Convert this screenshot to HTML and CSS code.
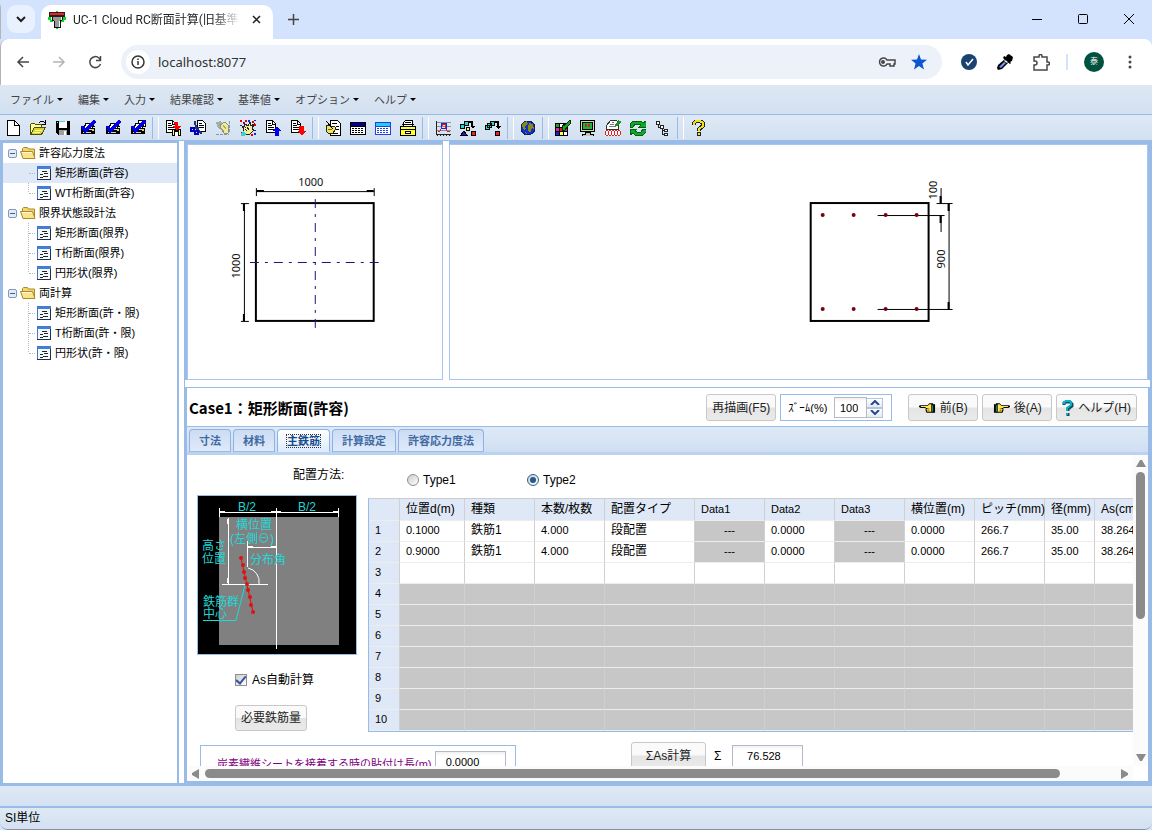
FILE: index.html
```
<!DOCTYPE html>
<html lang="ja">
<head>
    <meta charset="utf-8">
    <title>UC-1 Cloud RC断面計算(旧基準)</title>
    <link rel="stylesheet" href="styles.css">
</head>
<body>

<!-- shared icons -->
<svg class="defs" aria-hidden="true">
    <symbol id="i-printer" viewBox="0 0 16 16">
        <path d="M5 6h10v1H5zM1 8h14v6H1z" fill="#000"/>
        <path d="M6 3h8l-2 5H4z" fill="#fff" stroke="#000"/>
        <path d="M2 9h10v1H2zM3 12h8v1H3z" fill="#d0d0d0"/>
        <path d="M12 9h2v2h-2z" fill="#e0d840"/>
        <path d="M2 6l3 5L15 1" fill="none" stroke="#0000e8" stroke-width="3"/>
    </symbol>
    <symbol id="i-doc" viewBox="0 0 16 16">
        <path d="M1.500 .5h6l3 3v9h-9z" fill="#fff" stroke="#000"/>
        <path d="M7.500 1v3h3M3 3.500h3M3 5.500h4M3 7.500h6M3 9.500h6" fill="none" stroke="#000"/>
    </symbol>
    <symbol id="i-folder" viewBox="0 0 16 16">
        <path d="M2.500 12V3.500l1-1h4l1 1.500h6v8z" fill="#f2d668" stroke="#a88a30"/>
        <path d="M3 13.500L.5 6.500h12l2.500 7z" fill="#fbe588" stroke="#a88a30"/>
        <path d="M2 7.500h10" stroke="#fffbe0"/>
    </symbol>
    <symbol id="i-form" viewBox="0 0 14 14">
        <path d="M.5 .5h13v13H.5z" fill="#f4f8ff" stroke="#4a78c0"/>
        <path d="M1 1h12v2H1z" fill="#3f7fe8"/>
        <path d="M0 13.500h14M13.500 3v11" stroke="#203050"/>
        <path d="M5 5.500h5M3 8.500h3M7 7.500h4M3 11.500h3M6 10.500h5" stroke="#222"/>
    </symbol>
    <symbol id="i-hand" viewBox="0 0 18 14">
        <path d="M1 4h8l2-2h4v10H8l-1-2V7H2L0 6V5z" fill="#000"/>
        <path d="M2 5h7l2-2h2v8H9l-1-1 1-1H8V8h1V7H7V6H2z" fill="#ffe94a"/>
        <path d="M14 3h3v9h-3z" fill="#000"/>
        <path d="M14 4h1v7h-1z" fill="#20a0a0"/>
        <path d="M9 8h2M9 10h2" stroke="#806000"/>
    </symbol>
    <symbol id="i-table" viewBox="0 0 16 16">
        <path d="M.5 2.500h15v12H.5z" fill="#fff" stroke="currentColor"/>
        <path d="M1 6.500h14" stroke="currentColor"/>
        <path d="M2 8.500h12M2 10.500h12M2 12.500h12" stroke="currentColor" stroke-dasharray="2 1"/>
    </symbol>
</svg>

<header class="titlebar">
    <button class="tab-search" aria-label="タブを検索">
        <svg width="10" height="8" viewBox="0 0 10 8"><path d="M1 2l4 4 4-4" fill="none" stroke="#1f1f1f" stroke-width="2"/></svg>
    </button>
    <div class="browser-tab">
        <svg width="18" height="18" viewBox="0 0 18 18" shape-rendering="crispEdges">
            <path d="M0 6h3v3H0zM15 6h3v3h-3zM2 9h3v2H2zM13 9h3v2h-3zM8 0h2v2H8zM8 15h2v3H8z" fill="#00e020"/>
            <path d="M1 1h16v5H1z" fill="#222"/>
            <path d="M2 2h14v2H2z" fill="#f02020"/>
            <path d="M5 6h8v3l-2 1v6H7v-6L5 9z" fill="#999"/>
            <path d="M4 6v3l2 1v6h6v-6l2-1V6" fill="none" stroke="#111"/>
        </svg>
        <span class="browser-tab-title">UC-1 Cloud RC断面計算(旧基準</span>
        <button class="icon-btn" aria-label="タブを閉じる">
            <svg width="9" height="9" viewBox="0 0 9 9"><path d="M1 1l7 7M8 1L1 8" stroke="#1f1f1f" stroke-width="1.500"/></svg>
        </button>
    </div>
    <button class="icon-btn new-tab" aria-label="新しいタブ">
        <svg width="11" height="11" viewBox="0 0 11 11"><path d="M5.500 0v11M0 5.500h11" stroke="#444" stroke-width="1.500"/></svg>
    </button>
    <div class="window-controls">
        <button class="icon-btn" aria-label="最小化"><svg width="11" height="11" viewBox="0 0 11 11"><path d="M0 5.500h10" stroke="#000"/></svg></button>
        <button class="icon-btn" aria-label="最大化"><svg width="11" height="11" viewBox="0 0 11 11"><rect x=".5" y=".5" width="9" height="9" rx="1" fill="none" stroke="#000"/></svg></button>
        <button class="icon-btn" aria-label="閉じる"><svg width="11" height="11" viewBox="0 0 11 11"><path d="M0 0l10 10M10 0L0 10" stroke="#000"/></svg></button>
    </div>
</header>

<div class="navbar">
    <div class="nav-buttons">
        <button class="icon-btn" aria-label="戻る"><svg width="14" height="14" viewBox="0 0 14 14"><path d="M13 7H2M7 2L2 7l5 5" fill="none" stroke="#474747" stroke-width="1.500"/></svg></button>
        <button class="icon-btn" aria-label="進む"><svg width="14" height="14" viewBox="0 0 14 14"><path d="M1 7h11M7 2l5 5-5 5" fill="none" stroke="#b4b4b4" stroke-width="1.500"/></svg></button>
        <button class="icon-btn" aria-label="再読み込み"><svg width="14" height="14" viewBox="0 0 14 14"><path d="M12.500 9A5.500 5.500 0 1 1 11 3l1.500 2" fill="none" stroke="#474747" stroke-width="1.500"/><path d="M12.500 1v4.500H8" fill="none" stroke="#474747" stroke-width="1.500"/></svg></button>
    </div>
    <div class="address">
        <button class="site-info" aria-label="サイト情報">
            <svg width="14" height="14" viewBox="0 0 14 14"><circle cx="7" cy="7" r="6" fill="none" stroke="#333" stroke-width="1.500"/><path d="M7 6v4M7 3.500V5" stroke="#333" stroke-width="1.500"/></svg>
        </button>
        <input type="text" class="url" value="localhost:8077" aria-label="アドレス">
        <svg width="18" height="12" viewBox="0 0 18 12"><path d="M9 4a4 4 0 1 0 0 4h3v2h4V8h1V4z" fill="none" stroke="#474747" stroke-width="1.500"/><circle cx="5" cy="6" r="2" fill="#474747"/></svg>
        <svg width="16" height="16" viewBox="0 0 16 16"><path d="M8 0l2 5.500 6 .3-4.600 3.700L13 15.500 8 12l-5 3.500 1.600-6L0 5.800l6-.3z" fill="#0b57d0"/></svg>
    </div>
    <div class="extensions">
        <svg width="16" height="16" viewBox="0 0 16 16"><circle cx="8" cy="8" r="8" fill="#1b426f"/><path d="M5 8l2 3 5-6" fill="none" stroke="#fff" stroke-width="1.500"/></svg>
        <svg width="16" height="16" viewBox="0 0 16 16"><path d="M10 1l2-1 4 3-1 4-2 1 1 1-1 1-7-6 1-2 2 1z" fill="#000"/><path d="M8 5l4 3-7 7-4 1-1-2 1-3z" fill="#000"/><path d="M7 8l2 1-5 5-2-1z" fill="#6f93ff"/><path d="M7 7l1-1 3 2-1 1z" fill="#fff"/></svg>
        <svg width="17" height="17" viewBox="0 0 17 17"><path d="M1 3h5V2a1.500 1.500 0 0 1 3 0v1h5v5h1a1.500 1.500 0 0 1 0 3h-1v5H1v-5h1a2 2 0 0 0 0-4H1z" fill="none" stroke="#474747" stroke-width="1.500"/></svg>
        <span class="ext-divider"></span>
        <span class="avatar">泰</span>
        <button class="icon-btn more" aria-label="メニュー"><svg width="4" height="14" viewBox="0 0 4 14" fill="#474747"><circle cx="2" cy="2" r="1.500"/><circle cx="2" cy="7" r="1.500"/><circle cx="2" cy="12" r="1.500"/></svg></button>
    </div>
</div>

<nav class="menubar">
    <button>ファイル</button>
    <button>編集</button>
    <button>入力</button>
    <button>結果確認</button>
    <button>基準値</button>
    <button>オプション</button>
    <button>ヘルプ</button>
</nav>

<div class="toolbar">
    <button aria-label="新規作成"><svg viewBox="0 0 16 16"><path d="M2.500 .5h7l5 5v10h-12z" fill="#fff" stroke="#000"/><path d="M9.500 .5v5h5" fill="none" stroke="#000"/></svg></button>
    <button aria-label="開く"><svg viewBox="0 0 16 16"><path d="M.5 14.500v-10l1-1h3l1 1h6v3" fill="#ffff9c" stroke="#505000"/><path d="M.5 14.500l4-7h11l-4 7z" fill="#d8d040" stroke="#505000"/><path d="M3 12h7M5 10h7" stroke="#ffff80"/><path d="M9 3l2-2h2l2 2M15 0v4h-3" fill="none" stroke="#000"/></svg></button>
    <button aria-label="保存"><svg viewBox="0 0 16 16"><path d="M1 1h14v14H3l-2-2z" fill="#000"/><path d="M4 1h8v7H4z" fill="#fff"/><path d="M4 1h6v1H4zM2 2h1v1H2z" fill="#40e0e0"/><path d="M4 10h8v5H4z" fill="#a0a0a0"/><path d="M9 11h2v4H9z" fill="#fff"/></svg></button>
    <button aria-label="印刷"><svg viewBox="0 0 16 16"><use href="#i-printer"/></svg></button>
    <button aria-label="印刷プレビュー"><svg viewBox="0 0 16 16"><use href="#i-printer"/></svg></button>
    <button aria-label="一括印刷"><svg viewBox="0 0 16 16"><path d="M8.500 .5h7v6h-7z" fill="#fff" stroke="#000"/><use href="#i-printer"/></svg></button>
    <span class="sep"></span>
    <button aria-label="コピー"><svg viewBox="0 0 16 16"><use href="#i-doc"/><path d="M7 9h9v7H7z" fill="#000"/><path d="M8 10h1v5H8zM14 10h1v5h-1z" fill="#ffff60"/><path d="M10 12h3v4h-3z" fill="#fff"/><path d="M9 2h4v4h3l-4 5-4-5h2V4H9z" fill="#f00"/></svg></button>
    <button aria-label="切り取り"><svg viewBox="0 0 16 16"><path d="M7.500 .5h5l3 3v8h-8z" fill="#fff" stroke="#000"/><path d="M9 3.500h3M9 5.500h5M9 7.500h5" stroke="#000"/><path d="M5 1l1 7 6 6M1 8h8" fill="none" stroke="#203080" stroke-width="2"/><path d="M1 8h3v3H1zM5 11h3v3H5z" fill="none" stroke="#0000c0" stroke-width="2"/></svg></button>
    <button aria-label="貼り付け"><svg viewBox="0 0 16 16"><path d="M1 2l5-1 4 5-3 4-4-2z" fill="#9ab0a8"/><path d="M5 5l5-3 3 3v8l-3 1-4-5z" fill="#eeea9c" stroke="#909080"/><path d="M8 5l3 4M6 8l3 3" stroke="#b0a860"/><path d="M14 1v12M1 14h13" stroke="#8898a8" stroke-dasharray="3 1"/></svg></button>
    <button aria-label="クリア"><svg viewBox="0 0 16 16"><path d="M0 0h2v2H0zM3 2h2v2H3zM5 0h2v2H5zM12 1h2v2h-2zM14 4h2v2h-2zM1 12h1v2H1zM11 14h2v2h-2z" fill="#e00000"/><path d="M8 0h2v2H8zM14 0h2v1h-2zM0 5h2v1H0zM13 10h3v1h-3zM14 13h2v2h-2z" fill="#2020e0"/><path d="M3 13l1-4-2-3 3 1-1-4 4 3 2-4 1 4 3-2-2 5 2 1-4 4-4 1z" fill="#f3ee9c" stroke="#222"/><path d="M7 7l2 3M5 9l2 2" stroke="#222"/><path d="M1 13l3-2 2 3-2 2H1z" fill="#40d0d0"/></svg></button>
    <button aria-label="上へ"><svg viewBox="0 0 16 16"><use href="#i-doc"/><path d="M12 6l4 5h-2v5h-4v-5H7z" fill="#0000f0"/></svg></button>
    <button aria-label="下へ"><svg viewBox="0 0 16 16"><use href="#i-doc"/><path d="M9 6h5v5h2l-4 5-5-5h2z" fill="#f00"/></svg></button>
    <span class="sep"></span>
    <button aria-label="入力"><svg viewBox="0 0 16 16"><path d="M5.500 .5h7l3 3v12h-10z" fill="#fff" stroke="#000"/><path d="M7 3.500h5M11 6.500h3M11 9.500h3M8 13.500h5" stroke="#000"/><path d="M1 5l4 1 5 1v3l-2 3H3l-2-2z" fill="#f0e458" stroke="#222"/><path d="M1 1l7 8" stroke="#000"/><path d="M3 9.500h4" stroke="#806000"/></svg></button>
    <button aria-label="表1"><svg viewBox="0 0 16 16" color="#000"><use href="#i-table"/><path d="M1 3h14v3H1z" fill="#000090"/></svg></button>
    <button aria-label="表2"><svg viewBox="0 0 16 16" color="#2040e0"><use href="#i-table"/><path d="M1 3h14v3H1z" fill="#20d0f0"/></svg></button>
    <button aria-label="保管"><svg viewBox="0 0 16 16"><path d="M3.500 6.500v-4l2-2h7v6" fill="#fff" stroke="#000"/><path d="M2 4.500h12M5 2.500h6" stroke="#000"/><path d="M.5 6.500h15v9H.5z" fill="#ffff30" stroke="#000"/><path d="M1 9.500h14" stroke="#000"/><path d="M5.500 11.500h5v2h-5z" fill="#fff" stroke="#000"/></svg></button>
    <span class="sep"></span>
    <button aria-label="グラフ"><svg viewBox="0 0 16 16"><path d="M1 2.500h15M1 6.500h15M1 10.500h15" stroke="#909090"/><path d="M1.500 1v13H16" fill="none" stroke="#222"/><path d="M2 15h14" stroke="#222" stroke-dasharray="1 2"/><path d="M3 12l2-1 3-7h2l2 7 3 1" fill="none" stroke="#e02020"/><circle cx="9" cy="6" r="3" fill="none" stroke="#2020e0"/></svg></button>
    <button aria-label="計算"><svg viewBox="0 0 16 16"><path d="M.5 4.500h4v4h-4zM4.500 1.500h4v4h-4z" fill="#20d8d8" stroke="#000"/><path d="M9 1h4v5h2l-2 3-3-3h1V3H9z" fill="#000"/><circle cx="8" cy="9" r="2" fill="#ffff40" stroke="#000"/><path d="M1 15l3-4 3 4z" fill="#2020e0" stroke="#000"/><path d="M11.500 11.500h4v4h-4z" fill="#f02020" stroke="#000"/></svg></button>
    <button aria-label="一括計算"><svg viewBox="0 0 16 16"><path d="M.5 5.500h4v4h-4zM2.500 3.500h4v4h-4zM5.500 1.500h4v4h-4z" fill="#20d8d8" stroke="#000"/><path d="M10 1h4v5h2l-3 3-3-3h2V3h-2z" fill="#000"/><path d="M10.500 11.500h4v4h-4z" fill="#f02020" stroke="#000"/></svg></button>
    <span class="sep"></span>
    <button aria-label="Web"><svg viewBox="0 0 16 16"><circle cx="8" cy="8" r="7" fill="#1030d0" stroke="#102060"/><path d="M3 3l4-2 1 3-3 2 1 3-2 1-2-4zM9 3l4 1 1 5-2-1-2 5-2-3V7zM4 12l3 1v1z" fill="#8a8a10"/></svg></button>
    <span class="sep"></span>
    <button aria-label="配色"><svg viewBox="0 0 16 16"><path d="M0 3h13v13H0z" fill="#000"/><path d="M1 4h3v3H1z" fill="#20a020"/><path d="M5 4h3v3H5z" fill="#fff"/><path d="M1 8h3v3H1zM9 8h3v3H9z" fill="#e020a0"/><path d="M5 8h3v3H5z" fill="#d02020"/><path d="M1 12h3v3H1z" fill="#2020e0"/><path d="M5 12h3v3H5z" fill="#ffff40"/><path d="M9 12h3v3H9z" fill="#fff"/><path d="M15 0l-5 5-3 1v4h3l2-3 4-4z" fill="#20a020" stroke="#043004"/></svg></button>
    <button aria-label="画面"><svg viewBox="0 0 16 16"><path d="M.5 .5h14v11H.5z" fill="#d8d4b8" stroke="#000"/><path d="M2.500 2.500h10v7h-10z" fill="#10c020" stroke="#000"/><path d="M5 4h2v3H5zM8 4h2v3H8z" fill="#c02060"/><path d="M5 12h5v2h3v2H2v-2h3z" fill="#c8c8b0" stroke="#000"/></svg></button>
    <button aria-label="書式"><svg viewBox="0 0 16 16"><path d="M1.500 9V5.500l4-5h6l2 2V9z" fill="#fff" stroke="#333"/><path d="M4 6.500h7M5 4.500h4M7 2.500h2" stroke="#777"/><path d="M15 1l-4 5" stroke="#209020" stroke-width="3"/><path d="M0 10h16v6H0z" fill="#fff"/><path d="M.5 11v4M3.500 11v4M6.500 11v4M9.500 11v4M12.500 11v4M15.500 11v4" stroke="#e02020"/><path d="M1 10.500h15M1 15.500h15" stroke="#e02020" stroke-dasharray="2 1"/></svg></button>
    <button aria-label="更新"><svg viewBox="0 0 16 16"><path d="M0 7V4l3-3h8l2 2 3-2v6H9l2-2-2-1H5L3 7z" fill="#10a828" stroke="#046014"/><path d="M16 9v3l-3 3H5l-2-2-3 2V9h7l-2 2 2 1h4l2-3z" fill="#10a828" stroke="#046014"/></svg></button>
    <button aria-label="ツリー"><svg viewBox="0 0 16 16"><path d="M1.500 1.500h3v3h-3zM5.500 5.500h3v3h-3zM9.500 9.500h3v2h-3zM9.500 13.500h3v2h-3z" fill="#fff" stroke="#222"/><path d="M3.500 5v2h2M7.500 9v5.500h2M7.500 10.500h2" fill="none" stroke="#222"/></svg></button>
    <span class="sep"></span>
    <button aria-label="ヘルプ"><svg viewBox="0 0 16 16"><path d="M4 5V3l2-2h4l3 2v3l-4 3v2" fill="none" stroke="#222" stroke-width="4"/><path d="M4 5V3l2-2h4l3 2v3l-4 3v2" fill="none" stroke="#f0e020" stroke-width="2"/><path d="M7.500 12.500h3v3h-3z" fill="#f0e020" stroke="#222"/></svg></button>
</div>

<main class="workspace">
    <aside class="sidebar">
        <ul class="tree">
            <li>
                <div class="branch"><button class="toggle" aria-label="折りたたむ"></button><svg><use href="#i-folder"/></svg>許容応力度法</div>
                <ul>
                    <li><a href="#rect1" class="selected"><svg><use href="#i-form"/></svg>矩形断面(許容)</a></li>
                    <li><a href="#wt"><svg><use href="#i-form"/></svg>WT桁断面(許容)</a></li>
                </ul>
            </li>
            <li>
                <div class="branch"><button class="toggle" aria-label="折りたたむ"></button><svg><use href="#i-folder"/></svg>限界状態設計法</div>
                <ul>
                    <li><a href="#rect2"><svg><use href="#i-form"/></svg>矩形断面(限界)</a></li>
                    <li><a href="#t2"><svg><use href="#i-form"/></svg>T桁断面(限界)</a></li>
                    <li><a href="#circle2"><svg><use href="#i-form"/></svg>円形状(限界)</a></li>
                </ul>
            </li>
            <li>
                <div class="branch"><button class="toggle" aria-label="折りたたむ"></button><svg><use href="#i-folder"/></svg>両計算</div>
                <ul>
                    <li><a href="#rect3"><svg><use href="#i-form"/></svg>矩形断面(許・限)</a></li>
                    <li><a href="#t3"><svg><use href="#i-form"/></svg>T桁断面(許・限)</a></li>
                    <li><a href="#circle3"><svg><use href="#i-form"/></svg>円形状(許・限)</a></li>
                </ul>
            </li>
        </ul>
    </aside>
    <div class="splitter-v"></div>

    <div class="center">
        <div class="drawings">
            <div class="drawing drawing-section">
                <svg viewBox="0 0 254 234" fill="none" stroke="#000">
                    <rect x="68" y="58" width="118" height="118" stroke-width="2"/>
                    <path d="M68.500 46.500h118M68.500 43v8M186.500 43v8M56.500 58.500v118M53 58.500h8M53 176.500h8"/>
                    <path d="M69 46h7M179 46h7M56 59v7M56 169v7" stroke-width="2"/>
                    <path d="M127.500 54v130M62 117.500h129" stroke="#1c1280" stroke-dasharray="9 6 3 6"/>
                    <text x="123" y="41">1000</text>
                    <text transform="translate(52 121) rotate(-90)">1000</text>
                </svg>
            </div>
            <div class="splitter-v"></div>
            <div class="drawing drawing-rebar">
                <svg viewBox="0 0 698 234" fill="none" stroke="#000">
                    <rect x="361" y="58" width="118" height="118" stroke-width="2"/>
                    <path d="M428 70.500h67M428 164.500h75M487 58.500h16M499.500 58.500v106M491.500 43v15M491.500 71v16"/>
                    <path d="M499 59v7M499 157v7M491 51v7M491 71v7" stroke-width="2"/>
                    <g fill="#7a0010" stroke="none">
                        <circle cx="373" cy="70" r="2"/><circle cx="404" cy="70" r="2"/><circle cx="436" cy="70" r="2"/><circle cx="467" cy="70" r="2"/>
                        <circle cx="373" cy="164" r="2"/><circle cx="404" cy="164" r="2"/><circle cx="436" cy="164" r="2"/><circle cx="467" cy="164" r="2"/>
                    </g>
                    <text transform="translate(487 45) rotate(-90)">100</text>
                    <text transform="translate(495 114) rotate(-90)">900</text>
                </svg>
            </div>
        </div>
        <div class="splitter-h"></div>

        <section class="editor">
            <div class="editor-head">
                <h1>Case1：矩形断面(許容)</h1>
                <button class="btn">再描画(F5)</button>
                <div class="zoom-box">
                    <label for="zoom">ｽﾞｰﾑ(%)</label>
                    <input type="text" id="zoom" value="100">
                    <div class="spinner">
                        <button aria-label="拡大"><svg width="10" height="5" viewBox="0 0 10 5"><path d="M1 5l4-4 4 4" fill="none" stroke="#24478f" stroke-width="2"/></svg></button>
                        <button aria-label="縮小"><svg width="10" height="5" viewBox="0 0 10 5"><path d="M1 0l4 4 4-4" fill="none" stroke="#24478f" stroke-width="2"/></svg></button>
                    </div>
                </div>
                <div class="head-nav">
                    <button class="btn"><svg width="17" height="14"><use href="#i-hand"/></svg>前(B)</button>
                    <button class="btn"><svg width="17" height="14" class="flip"><use href="#i-hand"/></svg>後(A)</button>
                    <button class="btn"><svg width="12" height="16" viewBox="0 0 12 16"><path d="M2 5V3l2-1h4l2 2v2L6 9v2M6 13v3" fill="none" stroke="#0c5060" stroke-width="3"/><path d="M2 4V2l2-1h4l1 2v2L5 8v3M5 13v2" fill="none" stroke="#10b0c8" stroke-width="2"/></svg>ヘルプ(H)</button>
                </div>
            </div>

            <div class="tabs" role="tablist">
                <button role="tab">寸法</button>
                <button role="tab">材料</button>
                <button role="tab" class="active"><span>主鉄筋</span></button>
                <button role="tab">計算設定</button>
                <button role="tab">許容応力度法</button>
            </div>

            <div class="scroller">
                <div class="sheet">
                    <div class="placement">
                        <span class="placement-label">配置方法:</span>
                        <label><input type="radio" name="placement">Type1</label>
                        <label><input type="radio" name="placement" checked>Type2</label>
                    </div>

                    <div class="rebar">
                        <div class="guide">
                            <svg class="guide-figure" viewBox="1 1 158 158" fill="none" stroke="#fff">
                                <rect x="22" y="22" width="120" height="128" fill="#808080" stroke="none"/>
                                <path d="M22 17.500h120M22.500 13v9M141.500 13v9M79.500 13v141M31.500 23v66M50.500 46v26M50 52.500h29M25 89.500h46M51 73a14 14 0 0 1 11 16"/>
                                <path d="M23 17h5M74 17h10M136 17h5M31 24v5M31 83v5M51 52h5M74 52h5" stroke-width="2"/>
                                <path d="M6 125.500h33L48 90" stroke="#20d8d8"/>
                                <path d="M44 63L56 117" stroke="#e01010"/>
                                <g fill="#e01010" stroke="none">
                                    <circle cx="44" cy="63" r="2"/><circle cx="46" cy="70" r="2"/><circle cx="47" cy="77" r="2"/><circle cx="48" cy="83" r="2"/><circle cx="50" cy="89" r="2"/><circle cx="51" cy="95" r="2"/><circle cx="53" cy="102" r="2"/><circle cx="54" cy="110" r="2"/><circle cx="56" cy="117" r="2"/>
                                </g>
                                <g class="guide-text">
                                    <text x="41" y="16">B/2</text>
                                    <text x="101" y="16">B/2</text>
                                    <text x="39" y="34">横位置</text>
                                    <text x="33" y="48">(左側⊖)</text>
                                    <text x="5" y="55">高さ</text>
                                    <text x="5" y="68">位置</text>
                                    <text x="53" y="69">分布角</text>
                                    <text x="6" y="111">鉄筋群</text>
                                    <text x="6" y="123">中心</text>
                                </g>
                            </svg>
                            <label class="auto"><input type="checkbox" checked>As自動計算</label>
                            <button class="btn">必要鉄筋量</button>
                        </div>

                        <table class="grid">
                            <colgroup>
                                <col class="c-no"><col class="c-pos"><col><col><col class="c-type"><col><col><col><col><col><col class="c-dia"><col>
                            </colgroup>
                            <thead>
                                <tr><th></th><th>位置d(m)</th><th>種類</th><th>本数/枚数</th><th>配置タイプ</th><th class="latin">Data1</th><th class="latin">Data2</th><th class="latin">Data3</th><th>横位置(m)</th><th>ピッチ(mm)</th><th>径(mm)</th><th>As(cm2)</th></tr>
                            </thead>
                            <tbody>
                                <tr><th>1</th><td>0.1000</td><td class="kanji">鉄筋1</td><td>4.000</td><td class="kanji">段配置</td><td class="off">---</td><td>0.0000</td><td class="off">---</td><td>0.0000</td><td>266.7</td><td>35.00</td><td>38.264</td></tr>
                                <tr><th>2</th><td>0.9000</td><td class="kanji">鉄筋1</td><td>4.000</td><td class="kanji">段配置</td><td class="off">---</td><td>0.0000</td><td class="off">---</td><td>0.0000</td><td>266.7</td><td>35.00</td><td>38.264</td></tr>
                                <tr><th>3</th><td></td><td></td><td></td><td></td><td></td><td></td><td></td><td></td><td></td><td></td><td></td></tr>
                                <tr class="empty"><th>4</th><td></td><td></td><td></td><td></td><td></td><td></td><td></td><td></td><td></td><td></td><td></td></tr>
                                <tr class="empty"><th>5</th><td></td><td></td><td></td><td></td><td></td><td></td><td></td><td></td><td></td><td></td><td></td></tr>
                                <tr class="empty"><th>6</th><td></td><td></td><td></td><td></td><td></td><td></td><td></td><td></td><td></td><td></td><td></td></tr>
                                <tr class="empty"><th>7</th><td></td><td></td><td></td><td></td><td></td><td></td><td></td><td></td><td></td><td></td><td></td></tr>
                                <tr class="empty"><th>8</th><td></td><td></td><td></td><td></td><td></td><td></td><td></td><td></td><td></td><td></td><td></td></tr>
                                <tr class="empty"><th>9</th><td></td><td></td><td></td><td></td><td></td><td></td><td></td><td></td><td></td><td></td><td></td></tr>
                                <tr class="empty"><th>10</th><td></td><td></td><td></td><td></td><td></td><td></td><td></td><td></td><td></td><td></td><td></td></tr>
                            </tbody>
                        </table>
                    </div>

                    <div class="totals">
                        <div class="sheet-box">
                            <label for="cfrp">炭素繊維シートを接着する時の貼付け長(m)</label>
                            <input type="text" id="cfrp" class="field" value="0.0000">
                        </div>
                        <div class="sum">
                            <button class="btn">ΣAs計算</button>
                            <label for="sum-as">Σ</label>
                            <input type="text" id="sum-as" class="field" value="76.528">
                        </div>
                    </div>
                </div>
                <div class="vscroll">
                    <svg width="10" height="8" viewBox="0 0 10 8"><path d="M0 8l4-7h2l4 7z" fill="#8b8b8b"/></svg>
                    <div class="track"><div class="thumb"></div></div>
                    <svg width="10" height="8" viewBox="0 0 10 8"><path d="M0 0l4 7h2l4-7z" fill="#8b8b8b"/></svg>
                </div>
                <div class="hscroll">
                    <svg width="8" height="10" viewBox="0 0 8 10"><path d="M8 0L1 4v2l7 4z" fill="#8b8b8b"/></svg>
                    <div class="track"><div class="thumb"></div></div>
                    <svg width="8" height="10" viewBox="0 0 8 10"><path d="M0 0l7 4v2l-7 4z" fill="#8b8b8b"/></svg>
                </div>
            </div>
        </section>
    </div>
</main>

<footer class="status">
    <div></div>
    <div>SI単位</div>
</footer>

</body>
</html>
```
FILE: styles.css
```
* {
    box-sizing: border-box;
    margin: 0;
    padding: 0;
}

body {
    display: flex;
    flex-direction: column;
    min-height: 100vh;
    overflow: hidden;
    border-bottom: 1px solid #8a8f98;
    border-radius: 8px;
    background: #d3e3fd;
    color: #000;
    font-family: "Liberation Sans", "Noto Sans CJK JP", sans-serif;
    font-size: 12px;
    line-height: 20px;
}

button,
input {
    font: inherit;
    color: inherit;
}

button {
    border: 0;
    background: none;
    white-space: nowrap;
}

svg {
    flex: none;
}

ul {
    list-style: none;
}

.defs {
    display: none;
}

.icon-btn {
    display: flex;
    align-items: center;
    justify-content: center;
}

/* browser frame */

.titlebar {
    display: flex;
    height: 39px;
    padding: 5px 0 0 6px;
    border-left: 1px solid #b4b4b4;
}

.tab-search {
    width: 28px;
    height: 28px;
    margin-right: 6px;
    border-radius: 9px;
    background: #e9f0fe;
}

.browser-tab {
    display: flex;
    align-items: center;
    gap: 7px;
    width: 232px;
    padding: 0 12px 5px 7px;
    border-radius: 10px 10px 0 0;
    background: #fff;
}

.browser-tab-title {
    flex: 1;
    overflow: hidden;
    white-space: nowrap;
    font-family: Roboto, "Noto Sans CJK JP", sans-serif;
    color: #1f1f1f;
    mask-image: linear-gradient(to right, #000 84%, transparent);
}

.browser-tab .icon-btn {
    width: 9px;
    margin-left: 5px;
}

.new-tab {
    width: 40px;
    height: 28px;
}

.window-controls {
    display: flex;
    height: 28px;
    margin-left: auto;
}

.window-controls .icon-btn {
    width: 46px;
}

.navbar {
    display: flex;
    align-items: center;
    height: 46px;
    border-left: 1px solid #b4b4b4;
    border-radius: 8px 8px 0 0;
    background: #fff;
}

.nav-buttons {
    display: flex;
    padding: 0 8px 0 4px;
}

.nav-buttons .icon-btn {
    width: 36px;
    height: 34px;
}

.address {
    display: flex;
    flex: 1;
    align-items: center;
    gap: 15px;
    height: 34px;
    padding: 0 15px 0 5px;
    border-radius: 17px;
    background: #edf2fa;
}

.site-info {
    display: flex;
    align-items: center;
    justify-content: center;
    width: 24px;
    height: 24px;
    border-radius: 50%;
    background: #fff;
}

.url {
    flex: 1;
    min-width: 0;
    margin-left: -7px;
    border: 0;
    background: none;
    font-family: "Noto Sans", sans-serif;
    font-size: 13px;
    color: #333;
}

.extensions {
    display: flex;
    align-items: center;
    gap: 20px;
    padding: 0 20px 0 19px;
}

.ext-divider {
    width: 2px;
    height: 16px;
    margin: 0 -4px;
    background: #d3e3fd;
}

.avatar {
    width: 20px;
    height: 20px;
    border-radius: 50%;
    background: #00513f;
    color: #fff;
    font-size: 8px;
    text-align: center;
}

.more {
    margin-left: 4px;
}

/* application menu and toolbar */

.menubar {
    display: flex;
    gap: 15px;
    height: 30px;
    padding: 0 10px;
    border-bottom: 1px solid #99bbe8;
    background: linear-gradient(#dee8f4, #d3e0f0);
    color: #444;
    font-size: 11px;
}

.menubar button {
    display: flex;
    align-items: center;
    gap: 3px;
}

.menubar button::after {
    content: "";
    border: 3px solid transparent;
    border-top-color: #000;
    border-bottom: 0;
}

.toolbar {
    display: flex;
    align-items: center;
    height: 26px;
    border-bottom: 1px solid #99bbe8;
    background: linear-gradient(#dfe9f6, #d2e0f0);
}

.toolbar button {
    display: flex;
    justify-content: center;
    width: 25px;
}

.toolbar svg {
    width: 16px;
    height: 16px;
    shape-rendering: crispEdges;
}

.sep {
    width: 7px;
    height: 22px;
    margin: 0 1px 0 2px;
    border-left: 1px solid #99bbe8;
    border-right: 1px solid #fff;
}

/* workspace */

.workspace {
    display: flex;
    flex: 1;
    background: #99bbe8;
}

.sidebar {
    width: 174px;
    margin: 2px 2px 3px 3px;
    background: #fff;
}

.splitter-v {
    width: 5px;
    margin-bottom: 3px;
    background: #fff;
}

.tree {
    font-size: 11px;
}

.branch,
.tree a {
    display: flex;
    align-items: center;
    gap: 3px;
    height: 20px;
    color: #000;
    text-decoration: none;
    white-space: nowrap;
}

.branch {
    padding-left: 5px;
}

.tree a {
    gap: 4px;
    padding-left: 34px;
}

.tree a.selected {
    background: #dfe8f6;
}

.tree a svg {
    width: 14px;
    height: 14px;
    shape-rendering: crispEdges;
}

.tree ul {
    background: repeating-linear-gradient(#bbb 0 1px, transparent 1px 2px) 25px 0 / 1px calc(100% - 10px) no-repeat;
}

.tree ul a::before {
    content: "";
    width: 6px;
    margin: 0 -2px 0 -8px;
    border-top: 1px dotted #bbb;
}

.toggle {
    width: 9px;
    height: 9px;
    border: 1px solid #7f9db9;
    border-radius: 2px;
    background: linear-gradient(#3a5fa0, #3a5fa0) center / 5px 1px no-repeat, #e4ebf5;
}

.branch svg {
    width: 16px;
    height: 16px;
}

.center {
    display: flex;
    flex: 1;
    flex-direction: column;
    min-width: 0;
    padding-right: 4px;
}

.drawings {
    display: flex;
    height: 239px;
    padding-left: 3px;
}

.drawings .splitter-v {
    width: 6px;
    margin-bottom: 0;
}

.drawing {
    margin-top: 3px;
    border: 1px solid #a9c6ee;
    background: #fff;
}

.drawing-section {
    flex: 4;
}

.drawing-rebar {
    flex: 11;
}

.drawing svg {
    display: block;
    width: 100%;
    height: 234px;
}

.drawing text {
    fill: #111;
    stroke: none;
    font-family: "Noto Sans", sans-serif;
    font-size: 11px;
    text-anchor: middle;
}

.splitter-h {
    height: 7px;
    margin: 0 -2px 0 1px;
    background: #fff;
}

.editor {
    display: flex;
    flex: 1;
    flex-direction: column;
    margin: 1px 0 5px 3px;
    background: #fff;
}

.editor-head {
    display: flex;
    align-items: center;
    gap: 4px;
    height: 38px;
    padding: 1px 11px 0 2px;
}

.editor-head h1 {
    flex: 1;
    font-family: "Noto Sans CJK JP", sans-serif;
    font-size: 15px;
    font-weight: bold;
}

.btn {
    display: flex;
    align-items: center;
    justify-content: center;
    gap: 4px;
    height: 27px;
    padding: 0 5px;
    border: 1px solid #c8c8c8;
    border-radius: 3px;
    background: linear-gradient(#fafafa 48%, #e4e4e4 52%, #eaeaea);
    color: #222;
}

.flip {
    transform: scaleX(-1);
}

.zoom-box {
    display: flex;
    align-items: center;
    height: 27px;
    padding: 0 8px 0 7px;
    border: 1px solid #99bbe8;
}

.zoom-box label {
    width: 46px;
    font-size: 11px;
    white-space: nowrap;
}

.zoom-box input,
.field {
    border: 1px solid #b5b8c8;
    background: linear-gradient(#eef0f2, #fff 4px);
    font-size: 11px;
    text-align: center;
}

.zoom-box input {
    width: 33px;
    height: 21px;
    padding-right: 8px;
    text-align: right;
}

.spinner {
    width: 16px;
}

.spinner button {
    display: flex;
    align-items: center;
    justify-content: center;
    width: 16px;
    height: 10px;
    border: 1px solid #b5c4dc;
    border-left: 0;
    background: linear-gradient(#fff, #e4eaf2);
}

.head-nav {
    display: flex;
    gap: 4px;
    margin-left: 12px;
}

.head-nav .btn {
    min-width: 70px;
}

.tabs {
    display: flex;
    gap: 2px;
    height: 29px;
    padding: 2px 2px 0;
    border-top: 1px solid #99bbe8;
    border-bottom: 3px solid #bcd2f0;
    background: linear-gradient(#dfe9f6, #cfdff2);
}

.tabs button {
    padding: 0 9px;
    border: 1px solid #8db2e3;
    border-bottom-color: #99bbe8;
    border-radius: 4px 4px 0 0;
    background: linear-gradient(#cbdcf3, #dfeafa);
    color: #416aa3;
    font-size: 11px;
    font-weight: bold;
}

.tabs .active {
    border-bottom-color: #deecfd;
    background: linear-gradient(#fff, #deecfd);
    color: #15498b;
}

.tabs .active span {
    outline: 1px dotted #333;
}

/* scrolled form */

.scroller {
    display: grid;
    flex: 1;
    grid-template-columns: minmax(0, 1fr) 15px;
    grid-template-rows: minmax(0, 1fr) 15px;
    min-height: 0;
}

.sheet {
    height: 0;
    min-height: 100%;
    overflow: hidden;
    padding-left: 10px;
}

.placement {
    display: flex;
    height: 40px;
    padding-left: 96px;
}

.placement-label {
    width: 114px;
    line-height: 40px;
}

.placement label {
    display: flex;
    align-items: center;
    gap: 4px;
    width: 120px;
    padding-top: 10px;
}

input[type="radio"],
input[type="checkbox"] {
    display: grid;
    place-items: center;
    width: 12px;
    height: 12px;
    appearance: none;
    border: 1px solid #8f8f8f;
    background: linear-gradient(135deg, #ccc, #fff);
}

input[type="radio"] {
    border-radius: 50%;
}

input[type="radio"]:checked {
    border-color: #2c628b;
}

input[type="radio"]:checked::after {
    content: "";
    width: 6px;
    height: 6px;
    border-radius: 50%;
    background: #1f5a92;
}

input[type="checkbox"]:checked::after {
    content: "";
    width: 4px;
    height: 8px;
    margin-top: -2px;
    border: solid #3554a0;
    border-width: 0 2px 2px 0;
    transform: rotate(40deg);
}

.rebar {
    display: flex;
    gap: 11px;
}

.guide {
    display: flex;
    flex: none;
    flex-direction: column;
    align-items: flex-start;
    gap: 18px;
    width: 160px;
}

.guide-figure {
    width: 160px;
    height: 160px;
    border: 1px solid #99bbe8;
    background: #000;
}

.guide-text {
    fill: #20d8d8;
    stroke: none;
    font-family: "Liberation Sans", "Noto Sans CJK JP", sans-serif;
    font-size: 12px;
}

.auto {
    display: flex;
    align-items: center;
    gap: 5px;
    height: 14px;
    margin-left: 38px;
}

.guide .btn {
    height: 26px;
    margin-left: 38px;
}

.grid {
    flex: none;
    width: 796px;
    margin-top: 3px;
    border: 1px solid #99bbe8;
    border-top-color: #ccc;
    border-collapse: separate;
    border-spacing: 0;
    table-layout: fixed;
}

.grid col {
    width: 70px;
}

.grid .c-no {
    width: 31px;
}

.grid .c-pos {
    width: 65px;
}

.grid .c-type {
    width: 90px;
}

.grid .c-dia {
    width: 50px;
}

.grid th,
.grid td {
    height: 21px;
    padding: 0 0 2px 6px;
    border-right: 1px solid #d0d0d0;
    border-bottom: 1px solid #ededed;
    font-size: 11px;
    font-weight: normal;
    line-height: 18px;
    text-align: left;
    white-space: nowrap;
}

.grid th {
    background: #dfe8f6;
}

.grid thead th {
    height: 22px;
    font-size: 12px;
}

.grid thead .latin {
    font-size: 11px;
}

.grid .kanji {
    font-size: 12px;
}

.grid .off {
    padding-left: 0;
    background: #c7c7c7;
    text-align: center;
}

.grid .empty td {
    background: #c7c7c7;
}

.totals {
    display: flex;
    padding-left: 3px;
    margin-top: 10px;
}

.sheet-box {
    display: flex;
    align-items: flex-start;
    justify-content: space-between;
    width: 316px;
    height: 60px;
    margin-top: 3px;
    padding: 5px 9px 0 16px;
    border: 1px solid #99bbe8;
}

.sheet-box label {
    padding-top: 3px;
    color: #800080;
    font-size: 11px;
    white-space: nowrap;
}

.field {
    width: 71px;
    height: 22px;
}

.sheet-box .field {
    padding-right: 16px;
}

.sum {
    display: flex;
    align-items: center;
    align-self: flex-start;
    gap: 8px;
    margin-left: 115px;
}

.sum .btn {
    width: 75px;
}

.sum .field {
    margin-left: 3px;
    padding-right: 8px;
}

.vscroll,
.hscroll {
    display: flex;
    align-items: center;
    justify-content: space-between;
    background: #fbfbfb;
}

.vscroll {
    flex-direction: column;
    gap: 5px;
    padding: 4px 0;
}

.hscroll {
    gap: 6px;
    padding: 0 4px;
}

.track {
    flex: 1;
}

.thumb {
    border-radius: 5px;
    background: #8b8b8b;
}

.vscroll .thumb {
    width: 9px;
    height: 53%;
}

.hscroll .thumb {
    width: 94%;
    height: 9px;
}

.status div {
    height: 20px;
    padding-left: 5px;
    background: linear-gradient(#dfe9f5, #d3e1f1);
}

.status div + div {
    height: 23px;
    border-top: 2px solid #99bbe8;
}
```
